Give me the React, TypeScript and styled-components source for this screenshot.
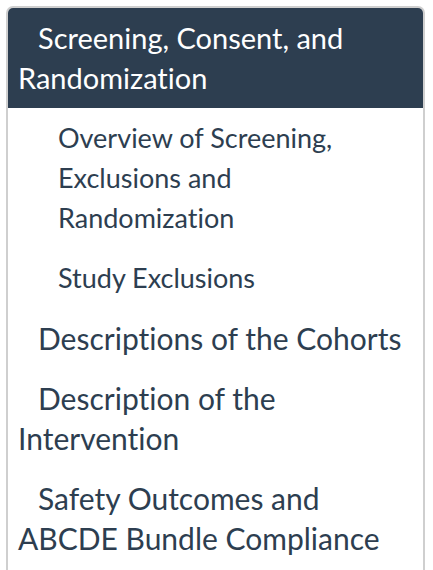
import React from "react";
import styled, { createGlobalStyle } from "styled-components";

const Global = createGlobalStyle`
  html, body {
    margin: 0;
    padding: 0;
    background: #ffffff;
    overflow: hidden;
  }
  body {
    font-family: Lato, "Open Sans", "Liberation Sans", sans-serif;
    font-variant-ligatures: no-common-ligatures;
    font-feature-settings: "liga" 0, "clig" 0;
  }
`;

const Panel = styled.nav`
  margin: 6px 0 0 6px;
  width: 419px;
  height: calc(100vh - 6px);
  box-sizing: border-box;
  border: 2px solid #cfcfcf;
  border-bottom: none;
  border-radius: 7px 7px 0 0;
  overflow: hidden;
  background: #ffffff;
`;

const Header = styled.div`
  background: #2d3e50;
  color: #ffffff;
  font-size: 29px;
  line-height: 40px;
  padding: 10px 10px 10px 10px;
  text-indent: 20px;
`;

const List = styled.ul`
  list-style: none;
  margin: 0;
  padding: 0;
`;

const Item = styled.li<{ $sub?: boolean }>`
  color: #2d3e50;
  font-size: ${(p) => (p.$sub ? "27px" : "30px")};
  line-height: 40px;
  padding: 10px 10px 10px ${(p) => (p.$sub ? "50px" : "10px")};
  text-indent: ${(p) => (p.$sub ? "0" : "20px")};
`;

const items: { label: string; sub?: boolean }[] = [
  { label: "Overview of Screening, Exclusions and Randomization", sub: true },
  { label: "Study Exclusions", sub: true },
  { label: "Descriptions of the Cohorts" },
  { label: "Description of the Intervention" },
  { label: "Safety Outcomes and ABCDE Bundle Compliance" },
];

export default function App() {
  return (
    <>
      <Global />
      <Panel>
        <Header>Screening, Consent, and Randomization</Header>
        <List>
          {items.map((it) => (
            <Item key={it.label} $sub={it.sub}>
              {it.label}
            </Item>
          ))}
        </List>
      </Panel>
    </>
  );
}
